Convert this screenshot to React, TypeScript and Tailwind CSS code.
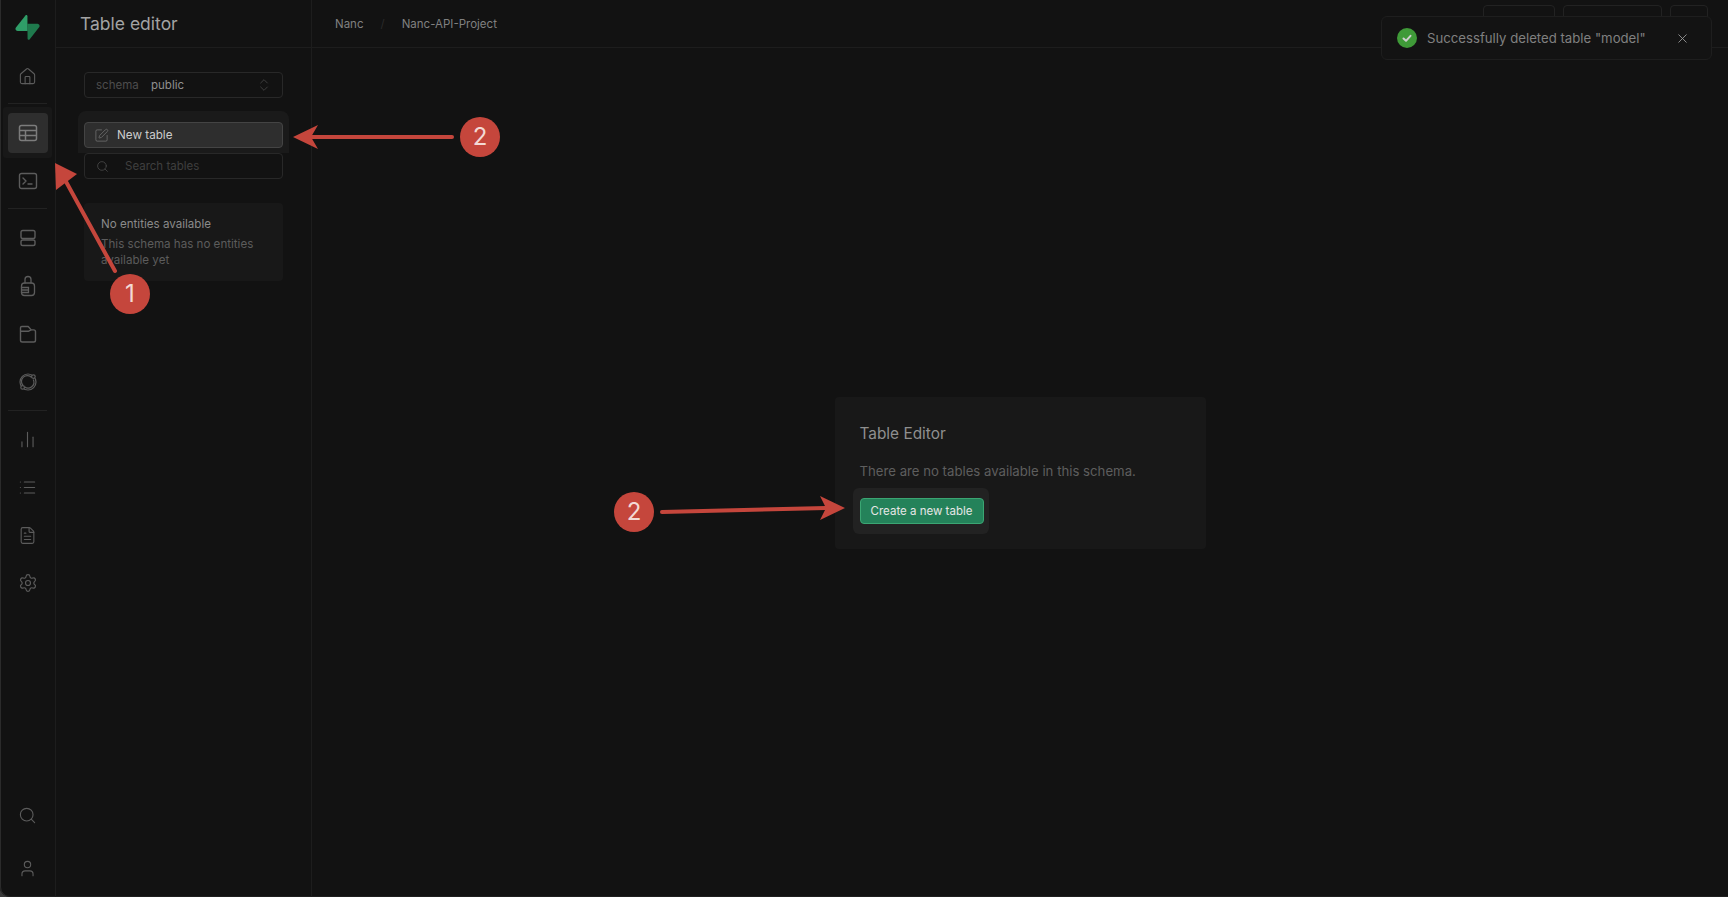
import React from 'react';
import {
  ChartNoAxesColumn,
  ChevronsUpDown,
  FileText,
  Home,
  List,
  Search,
  Settings,
  SquarePen,
  User,
  X,
} from 'lucide-react';

const font = { fontFamily: 'Inter, "Noto Sans", sans-serif' };

const RailItem: React.FC<{ children: React.ReactNode }> = ({ children }) => (
  <div className="flex h-12 w-full shrink-0 items-center justify-center text-[#5c5c5c]">{children}</div>
);

const Logo = () => (
  <svg width="25" height="25" viewBox="0 0 109 113" fill="none">
    <path d="M63.7 110.3c-2.9 3.6-8.7 1.6-8.8-3L54 40h45.2c8.2 0 12.8 9.5 7.7 15.9L63.7 110.3z" fill="#1f7a4d" />
    <path d="M45.3 2.1c2.9-3.6 8.7-1.6 8.8 3L54.5 72H9.8c-8.2 0-12.8-9.5-7.7-15.9L45.3 2.1z" fill="#2f9e68" />
  </svg>
);

const TableIcon = () => (
  <svg width="20" height="18" viewBox="0 0 20 18" fill="none" stroke="currentColor" strokeWidth="1.5">
    <rect x="1.5" y="1.5" width="17" height="15" rx="2" />
    <path d="M1.5 6.5h17M1.5 11.5h17M7.5 6.5v10" />
  </svg>
);

const TerminalIcon = () => (
  <svg width="20" height="18" viewBox="0 0 20 18" fill="none" stroke="currentColor" strokeWidth="1.4" strokeLinecap="round" strokeLinejoin="round">
    <rect x="1.5" y="1.5" width="17" height="15" rx="2" />
    <path d="m5 6 3 3-3 3M10 12h4" />
  </svg>
);

const DatabaseIcon = () => (
  <svg width="20" height="20" viewBox="0 0 20 20" fill="none" stroke="currentColor" strokeWidth="1.4">
    <rect x="3" y="2.5" width="14" height="8" rx="1.8" />
    <rect x="3" y="12" width="14" height="5.5" rx="1.8" />
  </svg>
);

const AuthIcon = () => (
  <svg width="20" height="22" viewBox="0 0 20 22" fill="none" stroke="currentColor" strokeWidth="1.3" strokeLinecap="round">
    <path d="M7 8V4.5a3 3 0 0 1 6 0V8" />
    <rect x="3.5" y="8" width="13" height="12.5" rx="3" />
    <path d="M3.5 12.5h7v5h-7M3.5 15h7" />
  </svg>
);

const FolderIcon = () => (
  <svg width="20" height="20" viewBox="0 0 20 20" fill="none" stroke="currentColor" strokeWidth="1.4" strokeLinejoin="round">
    <path d="M2.5 6V3.8c0-.7.6-1.3 1.3-1.3h6.4l3 3.4h2.5c1 0 1.8.8 1.8 1.8v8.5c0 1-.8 1.8-1.8 1.8H4.3c-1 0-1.8-.8-1.8-1.8V6z" />
    <path d="M2.5 7.2h8.2l2.5-1.3" />
  </svg>
);

const RealtimeIcon = () => (
  <svg width="20" height="20" viewBox="0 0 20 20" fill="none" stroke="currentColor" strokeWidth="1.2">
    <circle cx="10" cy="10" r="8" />
    <path d="M5 13.5A5.8 5.8 0 0 1 13.8 5.5M15.2 7.5a5.8 5.8 0 0 1-8.8 7.2" />
    <circle cx="15.4" cy="4.6" r="1.8" fill="#121212" />
    <circle cx="4.6" cy="15.4" r="1.8" fill="#121212" />
  </svg>
);

const Rail = () => (
  <aside className="flex h-full w-[56px] shrink-0 flex-col border-r border-[#1d1d1d]">
    <div className="flex h-[52px] shrink-0 items-center justify-center pt-[3px]">
      <Logo />
    </div>
    <RailItem><Home size={19} strokeWidth={1.4} /></RailItem>
    <div className="mx-2 my-[3px] h-px shrink-0 bg-[#222222]" />
    <div className="mx-[3px] flex h-[51px] shrink-0 items-center justify-center rounded-[3px] bg-[#181818]">
      <div className="flex h-10 w-10 items-center justify-center rounded bg-[#2e2e2e] text-[#7c7c7c]">
        <TableIcon />
      </div>
    </div>
    <div className="flex h-[46px] w-full shrink-0 items-center justify-center text-[#5c5c5c]">
      <TerminalIcon />
    </div>
    <div className="mx-2 mb-[5px] mt-[4px] h-px shrink-0 bg-[#222222]" />
    <RailItem><DatabaseIcon /></RailItem>
    <RailItem><AuthIcon /></RailItem>
    <RailItem><FolderIcon /></RailItem>
    <RailItem><RealtimeIcon /></RailItem>
    <div className="mx-2 my-[4px] h-px shrink-0 bg-[#222222]" />
    <RailItem><ChartNoAxesColumn size={19} strokeWidth={1.4} /></RailItem>
    <RailItem><List size={19} strokeWidth={1.4} /></RailItem>
    <RailItem><FileText size={19} strokeWidth={1.4} /></RailItem>
    <RailItem><Settings size={20} strokeWidth={1.4} /></RailItem>
    <div className="mt-auto flex flex-col gap-[5px] pb-[5px]">
      <RailItem><Search size={19} strokeWidth={1.4} /></RailItem>
      <RailItem><User size={19} strokeWidth={1.4} /></RailItem>
    </div>
  </aside>
);

const Sidebar = () => (
  <aside className="flex h-full w-[256px] shrink-0 flex-col border-r border-[#1d1d1d]">
    <div className="flex h-[48px] shrink-0 items-center border-b border-[#1d1d1d] pl-6 pt-[2px] text-[17.5px] text-[#a3a3a3]">Table editor</div>
    <div className="flex flex-col px-[28px] pt-6">
      <div className="flex h-[26px] items-center rounded border border-[#282828] pl-[11px] pr-[10px] text-[11.5px]">
        <span className="mt-[2px] w-[55px] text-[#4d4d4d]">schema</span>
        <span className="mt-[2px] text-[#8f8f8f]">public</span>
        <ChevronsUpDown size={16} strokeWidth={1.3} className="ml-auto text-[#444444]" />
      </div>
      <div className="-mx-[6px] mt-[13px] rounded-t-lg bg-[#1a1a1a] px-[6px] pt-[11px] pb-[5px]">
        <div className="flex h-[26px] items-center rounded border border-[#444444] bg-[#2e2e2e] pl-[9px] text-[11.7px] text-[#cccccc]">
          <SquarePen size={15} strokeWidth={1.3} className="mr-[8px] text-[#6f6f6f]" />
          <span className="mt-[2px]">New table</span>
        </div>
      </div>
      <div className="flex h-[26px] items-center rounded border border-[#282828] pl-[11px] text-[11.5px] text-[#3f3f3f]">
        <Search size={13} strokeWidth={1.4} className="mr-4 text-[#4d4d4d]" />
        <span className="mt-[2px]">Search tables</span>
      </div>
      <div className="mt-[24px] h-[78px] rounded bg-[#181818] pl-[17px] pr-4 pt-[13px] text-[11.6px] leading-4">
        <div className="text-[#8a8a8a]">No entities available</div>
        <div className="mt-[4px] text-[#5c5c5c]">This schema has no entities available yet</div>
      </div>
    </div>
  </aside>
);

const Header = () => (
  <header className="flex h-[48px] shrink-0 items-center border-b border-[#1d1d1d] pl-[23px] pr-[20px] text-[11.5px] text-[#808080]">
    <span className="mt-[2px]">Nanc</span>
    <span className="mx-[17px] mt-[2px] text-[#2a2a2a]">/</span>
    <span className="mt-[2px]">Nanc-API-Project</span>
    {/* these sit mostly hidden under the toast */}
    <div className="ml-auto flex gap-2">
      <div className="h-8 w-[72px] -translate-y-[3px] rounded border border-[#222222]" />
      <div className="h-8 w-[99px] -translate-y-[3px] rounded border border-[#222222]" />
      <div className="h-8 w-[38px] -translate-y-[3px] rounded border border-[#222222]" />
    </div>
  </header>
);

const EmptyCard = () => (
  <div className="flex h-[152px] w-[371px] flex-col rounded bg-[#181818] pl-[25px] pt-[26px]">
    <div className="text-[15.4px] leading-[22px] text-[#8f8f8f]">Table Editor</div>
    <div className="mt-[16px] text-[13.2px] leading-5 text-[#5e5e5e]">There are no tables available in this schema.</div>
    <div className="-ml-[7px] mt-[7px] flex h-[46px] w-[136px] items-center justify-center rounded-md bg-[#222222]">
      <div className="ml-[2px] flex h-[26px] w-[124px] items-center justify-center rounded border border-[#3ba673] bg-[#24825a] text-[11.5px] text-[#e6e6e6]">
        <span className="mt-[2px]">Create a new table</span>
      </div>
    </div>
  </div>
);

const Toast = () => (
  <div className="absolute right-[16px] top-[16px] flex h-[44px] w-[331px] items-center rounded-md border border-[#1e1e1e] bg-[#131313] pl-[15px] pr-[21px] text-[13.2px] text-[#808080]">
    <span className="mr-[10px] flex h-5 w-5 items-center justify-center rounded-full bg-[#3f9a38]">
      <svg width="12" height="12" viewBox="0 0 12 12" fill="none" stroke="#cfcfcf" strokeWidth="2" strokeLinecap="round" strokeLinejoin="round">
        <path d="M2.5 6.5 5 8.8l4.5-5" />
      </svg>
    </span>
    <span className="mt-[2px]">Successfully deleted table "model"</span>
    <X size={15} strokeWidth={1.4} className="ml-auto text-[#9a9a9a]" />
  </div>
);

const Badge: React.FC<{ n: number; className: string }> = ({ n, className }) => (
  <div className={`absolute flex h-10 w-10 items-center justify-center rounded-full bg-[#c5463c] text-[24px] text-[#f3d9d5] ${className}`}>{n}</div>
);

// red call-outs drawn over the screenshot
const Annotations = () => (
  <>
    <svg className="pointer-events-none absolute inset-0" width="1728" height="897" fill="none">
      <path d="M115 271 64 178" stroke="#c5463c" strokeWidth="4" strokeLinecap="round" />
      <path d="M55 163 56 190 77 174Z" fill="#c5463c" />
      <path d="M452 137H310" stroke="#c5463c" strokeWidth="4" strokeLinecap="round" />
      <path d="M293 137 318 125 311 137 318 149Z" fill="#c5463c" />
      <path d="M662 512 826 508" stroke="#c5463c" strokeWidth="4" strokeLinecap="round" />
      <path d="M845 508 820 496 826 508 820 520Z" fill="#c5463c" />
    </svg>
    <Badge n={1} className="left-[110px] top-[274px]" />
    <Badge n={2} className="left-[460px] top-[117px]" />
    <Badge n={2} className="left-[614px] top-[492px]" />
  </>
);

export default function App() {
  return (
    <div className="h-[897px] w-[1728px] bg-[#3a3a3a]">
      <div
        className="relative flex h-full w-full overflow-hidden rounded-bl-[10px] bg-[#121212] shadow-[inset_1px_0_0_#2b2b2b,inset_0_-1px_0_#1f1f1f]"
        style={font}
      >
        <Rail />
        <Sidebar />
        <main className="flex min-w-0 flex-1 flex-col">
          <Header />
          <div className="flex flex-1 items-start justify-center pt-[349px]">
            <EmptyCard />
          </div>
        </main>
        <Toast />
        <Annotations />
      </div>
    </div>
  );
}
